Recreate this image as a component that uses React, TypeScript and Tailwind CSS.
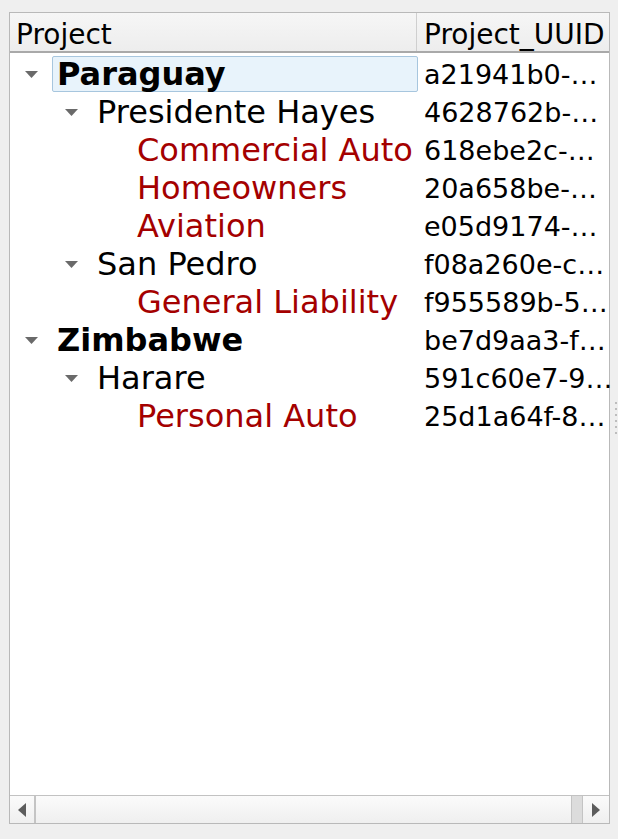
import React from "react";

type Row = { level: number; label: string; uuid: string; kind: "bold" | "normal" | "leaf"; arrow: boolean; selected?: boolean };

const rows: Row[] = [
  { level: 0, label: "Paraguay", uuid: "a21941b0-…", kind: "bold", arrow: true, selected: true },
  { level: 1, label: "Presidente Hayes", uuid: "4628762b-…", kind: "normal", arrow: true },
  { level: 2, label: "Commercial Auto", uuid: "618ebe2c-…", kind: "leaf", arrow: false },
  { level: 2, label: "Homeowners", uuid: "20a658be-…", kind: "leaf", arrow: false },
  { level: 2, label: "Aviation", uuid: "e05d9174-…", kind: "leaf", arrow: false },
  { level: 1, label: "San Pedro", uuid: "f08a260e-c…", kind: "normal", arrow: true },
  { level: 2, label: "General Liability", uuid: "f955589b-5…", kind: "leaf", arrow: false },
  { level: 0, label: "Zimbabwe", uuid: "be7d9aa3-f…", kind: "bold", arrow: true },
  { level: 1, label: "Harare", uuid: "591c60e7-9…", kind: "normal", arrow: true },
  { level: 2, label: "Personal Auto", uuid: "25d1a64f-8…", kind: "leaf", arrow: false },
];

const indent: Record<number, string> = { 0: "w-0", 1: "w-[40px]", 2: "w-[80px]" };

function Arrow() {
  return (
    <svg width="13" height="7" viewBox="0 0 13 7" className="block">
      <polygon points="0,0 13,0 6.5,7" fill="#6a6a6a" />
    </svg>
  );
}

export default function App() {
  const font = { fontFamily: '"DejaVu Sans", sans-serif' };
  return (
    <div className="w-[618px] h-[839px] bg-[#efefef] flex pt-[12px] pl-[9px]" style={font}>
      <div className="w-[601px] h-[812px] shrink-0 border border-[#b9b9b9] bg-white flex flex-col">
        {/* header */}
        <div className="h-[40px] flex border-b-2 border-[#a9a9a9] bg-gradient-to-b from-[#f6f6f6] to-[#ededed] text-[28px] leading-none text-black">
          <div className="w-[407px] shrink-0 flex items-center pl-[6px] pt-[5px] border-r border-[#cfcfcf]">Project</div>
          <div className="flex-1 min-w-0 flex items-center pl-[7px] pt-[5px] whitespace-nowrap">Project_UUID</div>
        </div>
        {/* rows */}
        <div className="flex-1 flex flex-col pt-[2px]">
          {rows.map((r, i) => (
            <div key={i} className="h-[38px] flex">
              <div className="w-[407px] shrink-0 flex items-center">
                <div className={indent[r.level]} />
                <div className="w-[42px] h-full flex items-center pl-[15px]">{r.arrow && <Arrow />}</div>
                <div
                  className={
                    "flex-1 h-[36px] flex items-center pl-[4px] rounded-[2px] border whitespace-nowrap " +
                    (r.selected ? "border-[#a7c6de] bg-[#e8f3fb] mr-[-1px]" : "border-transparent")
                  }
                >
                  <span
                    className={
                      "leading-none " +
                      (r.kind === "bold"
                        ? "text-[32px] font-bold text-black"
                        : r.kind === "leaf"
                        ? "text-[32px] text-[#a40000]"
                        : "text-[32px] text-black")
                    }
                  >
                    {r.label}
                  </span>
                </div>
              </div>
              <div className="flex-1 min-w-0 flex items-center pl-[7px] text-[27px] leading-none text-black whitespace-nowrap">
                {r.uuid}
              </div>
            </div>
          ))}
        </div>
        {/* horizontal scrollbar */}
        <div className="h-[28px] border-t border-[#c2c2c2] flex bg-gradient-to-b from-[#fbfbfb] to-[#efefef]">
          <div className="w-[26px] border-r-2 border-[#c4c4c4] flex items-center justify-center">
            <svg width="8" height="14" viewBox="0 0 8 14">
              <polygon points="8,0 8,14 0,7" fill="#5c5c5c" />
            </svg>
          </div>
          <div className="flex-1" />
          <div className="w-[12px] bg-[#dcdcdc] border-x border-[#c4c4c4]" />
          <div className="w-[26px] flex items-center justify-center">
            <svg width="8" height="14" viewBox="0 0 8 14">
              <polygon points="0,0 0,14 8,7" fill="#5c5c5c" />
            </svg>
          </div>
        </div>
      </div>
      <div className="w-[8px] h-[812px] flex flex-col items-center justify-center gap-[4px] pl-[3px]">
        {[0, 1, 2, 3, 4, 5].map((d) => (
          <div key={d} className="w-[2px] h-[2px] bg-[#bdbdbd]" />
        ))}
      </div>
    </div>
  );
}
